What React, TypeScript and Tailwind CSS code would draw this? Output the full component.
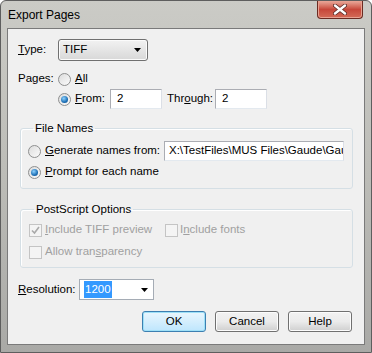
const Radio = ({ checked }: { checked?: boolean }) => (
  <span className="flex h-[13px] w-[13px] shrink-0 items-center justify-center rounded-full border border-[#8e8f8f] bg-gradient-to-br from-[#dcdcdc] to-[#fbfbfb]">
    {checked && (
      <span className="h-[7px] w-[7px] rounded-full bg-[radial-gradient(circle_at_40%_35%,#8fd3ff,#1d6fb5_60%,#0f4c8a)]" />
    )}
  </span>
)

const Check = ({ checked }: { checked?: boolean }) => (
  <span className="flex h-[13px] w-[13px] shrink-0 items-center justify-center border border-[#c4c4c4] bg-[#f4f4f4]">
    {checked && (
      <svg width="9" height="9" viewBox="0 0 9 9">
        <path d="M1 4.5 L3.5 7 L8 1" fill="none" stroke="#a9a9a9" strokeWidth="1.6" />
      </svg>
    )}
  </span>
)

const Arrow = () => (
  <svg width="7" height="4" viewBox="0 0 7 4">
    <path d="M0 0 H7 L3.5 4 Z" fill="#000" />
  </svg>
)

const Button = ({ children, primary }: { children: React.ReactNode; primary?: boolean }) => (
  <button
    className={
      primary
        ? "h-[21px] w-[64px] rounded-[3px] border border-[#3c7fb1] bg-gradient-to-b from-[#eaf6fd] to-[#bee6fd] shadow-[inset_0_0_0_1px_#9ee0f7] text-black"
        : "h-[21px] w-[64px] rounded-[3px] border border-[#707070] bg-gradient-to-b from-[#f2f2f2] via-[#ebebeb] to-[#cfcfcf] shadow-[inset_0_0_0_1px_#fcfcfc] text-black"
    }>
    {children}
  </button>
)

export default function App() {
  return (
    <div
      className="flex h-[353px] w-[372px] flex-col overflow-hidden rounded-t-[6px] border border-[#5e5e5e] bg-gradient-to-b from-[#cbcbc6] via-[#bcbcb7] to-[#a9a9a6] text-[11.5px] text-black"
      style={{ fontFamily: '"Liberation Sans", Arial, sans-serif' }}>
      {/* title bar */}
      <div className="flex h-[27px] shrink-0 items-start justify-between pl-[7px] pr-[8px]">
        <span className="mt-[7px] text-[12px] leading-[14px]">Export Pages</span>
        <div className="flex h-[18px] w-[46px] items-center justify-center rounded-b-[4px] border border-t-0 border-[#6b2b22] bg-gradient-to-b from-[#e9a99b] via-[#c7473a] to-[#d46b58] shadow-[inset_0_0_0_1px_#e8a191]">
          <svg width="14" height="11" viewBox="0 0 14 11">
            <path d="M2 1.5 L12 9.5 M12 1.5 L2 9.5" stroke="#5a2a25" strokeWidth="4" strokeLinecap="round" />
            <path d="M2 1.5 L12 9.5 M12 1.5 L2 9.5" stroke="#fff" strokeWidth="2.4" strokeLinecap="round" />
          </svg>
        </div>
      </div>

      {/* client area */}
      <div className="mx-[6px] mb-[7px] flex flex-1 flex-col border border-[#7a7a7a] bg-[#f0f0f0] px-[10px] pt-[10px] pb-[12px]">
        {/* type */}
        <div className="flex h-[22px] items-center">
          <span className="w-[40px]">
            <u>T</u>ype:
          </span>
          <div className="flex h-[22px] w-[90px] items-center justify-between rounded-[3px] border border-[#707070] bg-gradient-to-b from-[#f2f2f2] to-[#d8d8d8] pl-[4px] pr-[6px] shadow-[inset_0_0_0_1px_#fbfbfb]">
            <span>TIFF</span>
            <Arrow />
          </div>
        </div>

        {/* pages */}
        <div className="mt-[10px] flex h-[16px] items-center">
          <span className="w-[40px]">Pages:</span>
          <Radio />
          <span className="ml-[4px]">
            <u>A</u>ll
          </span>
        </div>
        <div className="mt-[2px] flex h-[20px] items-center pl-[40px]">
          <Radio checked />
          <span className="ml-[4px] w-[35px]">
            <u>F</u>rom:
          </span>
          <div className="flex h-[20px] w-[52px] items-center border border-[#abadb3] border-b-[#e3e9ef] border-r-[#dbdfe6] bg-white pl-[6px]">
            2
          </div>
          <span className="ml-[5px] w-[48px]">
            Thr<u>o</u>ugh:
          </span>
          <div className="flex h-[20px] w-[52px] items-center border border-[#abadb3] border-b-[#e3e9ef] border-r-[#dbdfe6] bg-white pl-[6px]">
            2
          </div>
        </div>

        {/* file names */}
        <fieldset className="mt-[12px] ml-[2px] mr-[1px] rounded-[3px] border border-[#d5dfe5] px-[7px] pt-[6px] pb-[7px] shadow-[inset_1px_1px_0_#fff]">
          <legend className="ml-[5px] px-[2px] leading-[14px]">File Names</legend>
          <div className="flex h-[20px] items-center">
            <Radio />
            <span className="ml-[4px] w-[119px]">
              <u>G</u>enerate names from:
            </span>
            <div className="flex h-[20px] w-[180px] items-center overflow-hidden whitespace-nowrap border border-[#abadb3] border-b-[#e3e9ef] border-r-[#dbdfe6] bg-white pl-[4px]">
              X:\TestFiles\MUS Files\Gaude\Gaude
            </div>
          </div>
          <div className="mt-[2px] flex h-[18px] items-center">
            <Radio checked />
            <span className="ml-[4px]">
              <u>P</u>rompt for each name
            </span>
          </div>
        </fieldset>

        {/* postscript */}
        <fieldset className="mt-[13px] ml-[2px] mr-[1px] rounded-[3px] border border-[#d5dfe5] px-[8px] pt-[7px] pb-[8px] text-[#a0a0a0] shadow-[inset_1px_1px_0_#fff]">
          <legend className="ml-[5px] px-[2px] leading-[14px] text-black">PostScript Options</legend>
          <div className="flex h-[14px] items-center">
            <Check checked />
            <span className="ml-[3px] w-[120px]">
              <u>I</u>nclude TIFF preview
            </span>
            <Check />
            <span className="ml-[2px]">
              I<u>n</u>clude fonts
            </span>
          </div>
          <div className="mt-[8px] flex h-[14px] items-center">
            <Check />
            <span className="ml-[3px]">
              Allow tran<u>s</u>parency
            </span>
          </div>
        </fieldset>

        {/* resolution */}
        <div className="mt-[11px] flex h-[21px] items-center">
          <span className="w-[61px]">
            <u>R</u>esolution:
          </span>
          <div className="flex h-[21px] w-[75px] items-center justify-between border border-[#a5acb5] bg-white pl-[4px] pr-[5px]">
            <span className="bg-[#3399ff] px-[1px] text-white">1200</span>
            <Arrow />
          </div>
        </div>

        {/* buttons */}
        <div className="mt-auto flex justify-end gap-[9px] pr-[2px]">
          <Button primary>OK</Button>
          <Button>Cancel</Button>
          <Button>Help</Button>
        </div>
      </div>
    </div>
  )
}
